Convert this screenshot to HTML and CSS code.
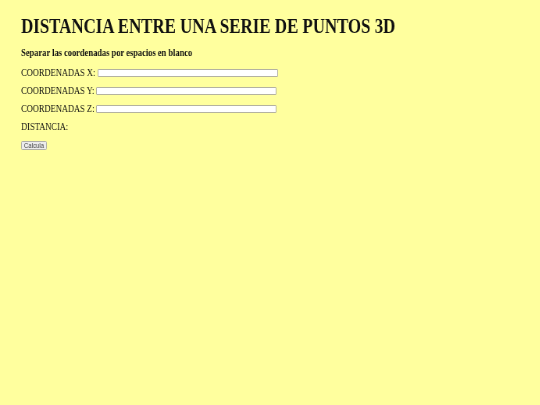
FILE: index.html
```html
<!DOCTYPE html>
<html lang="es">
<head>
<meta charset="utf-8">
<title>Distancia entre una serie de puntos 3D</title>
<link rel="stylesheet" href="styles.css">
</head>
<body>
<main class="page">
  <h1 class="title">DISTANCIA ENTRE UNA SERIE DE PUNTOS 3D</h1>
  <h4 class="hint">Separar las coordenadas por espacios en blanco</h4>
  <form class="form">
    <div class="row"><label class="label">COORDENADAS X:</label><input class="field" type="text"></div>
    <div class="row"><label class="label">COORDENADAS Y:</label><input class="field" type="text"></div>
    <div class="row"><label class="label">COORDENADAS Z:</label><input class="field" type="text"></div>
    <div class="row"><span class="label">DISTANCIA:</span></div>
    <div class="actions"><button class="btn" type="button">Calcula</button></div>
  </form>
</main>
</body>
</html>
```
FILE: styles.css
```css
html, body {
  margin: 0;
  padding: 0;
  background: #ffff9e;
}
body {
  font-family: "Liberation Serif", "Times New Roman", serif;
  color: #111;
}
.page {
  padding: 14px 0 0 27px;
  transform: scaleX(0.781);
  transform-origin: 0 0;
  will-change: transform;
}
.title {
  margin: 0;
  font-size: 21.6px;
  line-height: 25px;
  font-weight: bold;
  white-space: nowrap;
}
.hint {
  margin: 6.5px 0 0;
  font-size: 10.8px;
  line-height: 12.4px;
  font-weight: bold;
}
.form {
  margin-top: 8.4px;
  display: flex;
  flex-direction: column;
  gap: 5.6px;
}
.row {
  display: flex;
  align-items: center;
  gap: 2.5px;
  font-size: 10.8px;
  line-height: 12.4px;
}
.field {
  box-sizing: border-box;
  width: 231px;
  height: 8px;
  margin: 0;
  padding: 0;
  border: 1px solid #b4b2a0;
  border-radius: 1px;
  background: #fff;
}
.actions {
  display: flex;
  margin-top: 3px;
}
.btn {
  box-sizing: border-box;
  width: 33px;
  height: 8.5px;
  margin: 0;
  padding: 0;
  font-family: "Liberation Sans", Arial, sans-serif;
  font-size: 7.6px;
  line-height: 6px;
  color: #444;
  background: #ececec;
  border: 1px solid #b0b0a8;
  border-radius: 1.5px;
}
```
